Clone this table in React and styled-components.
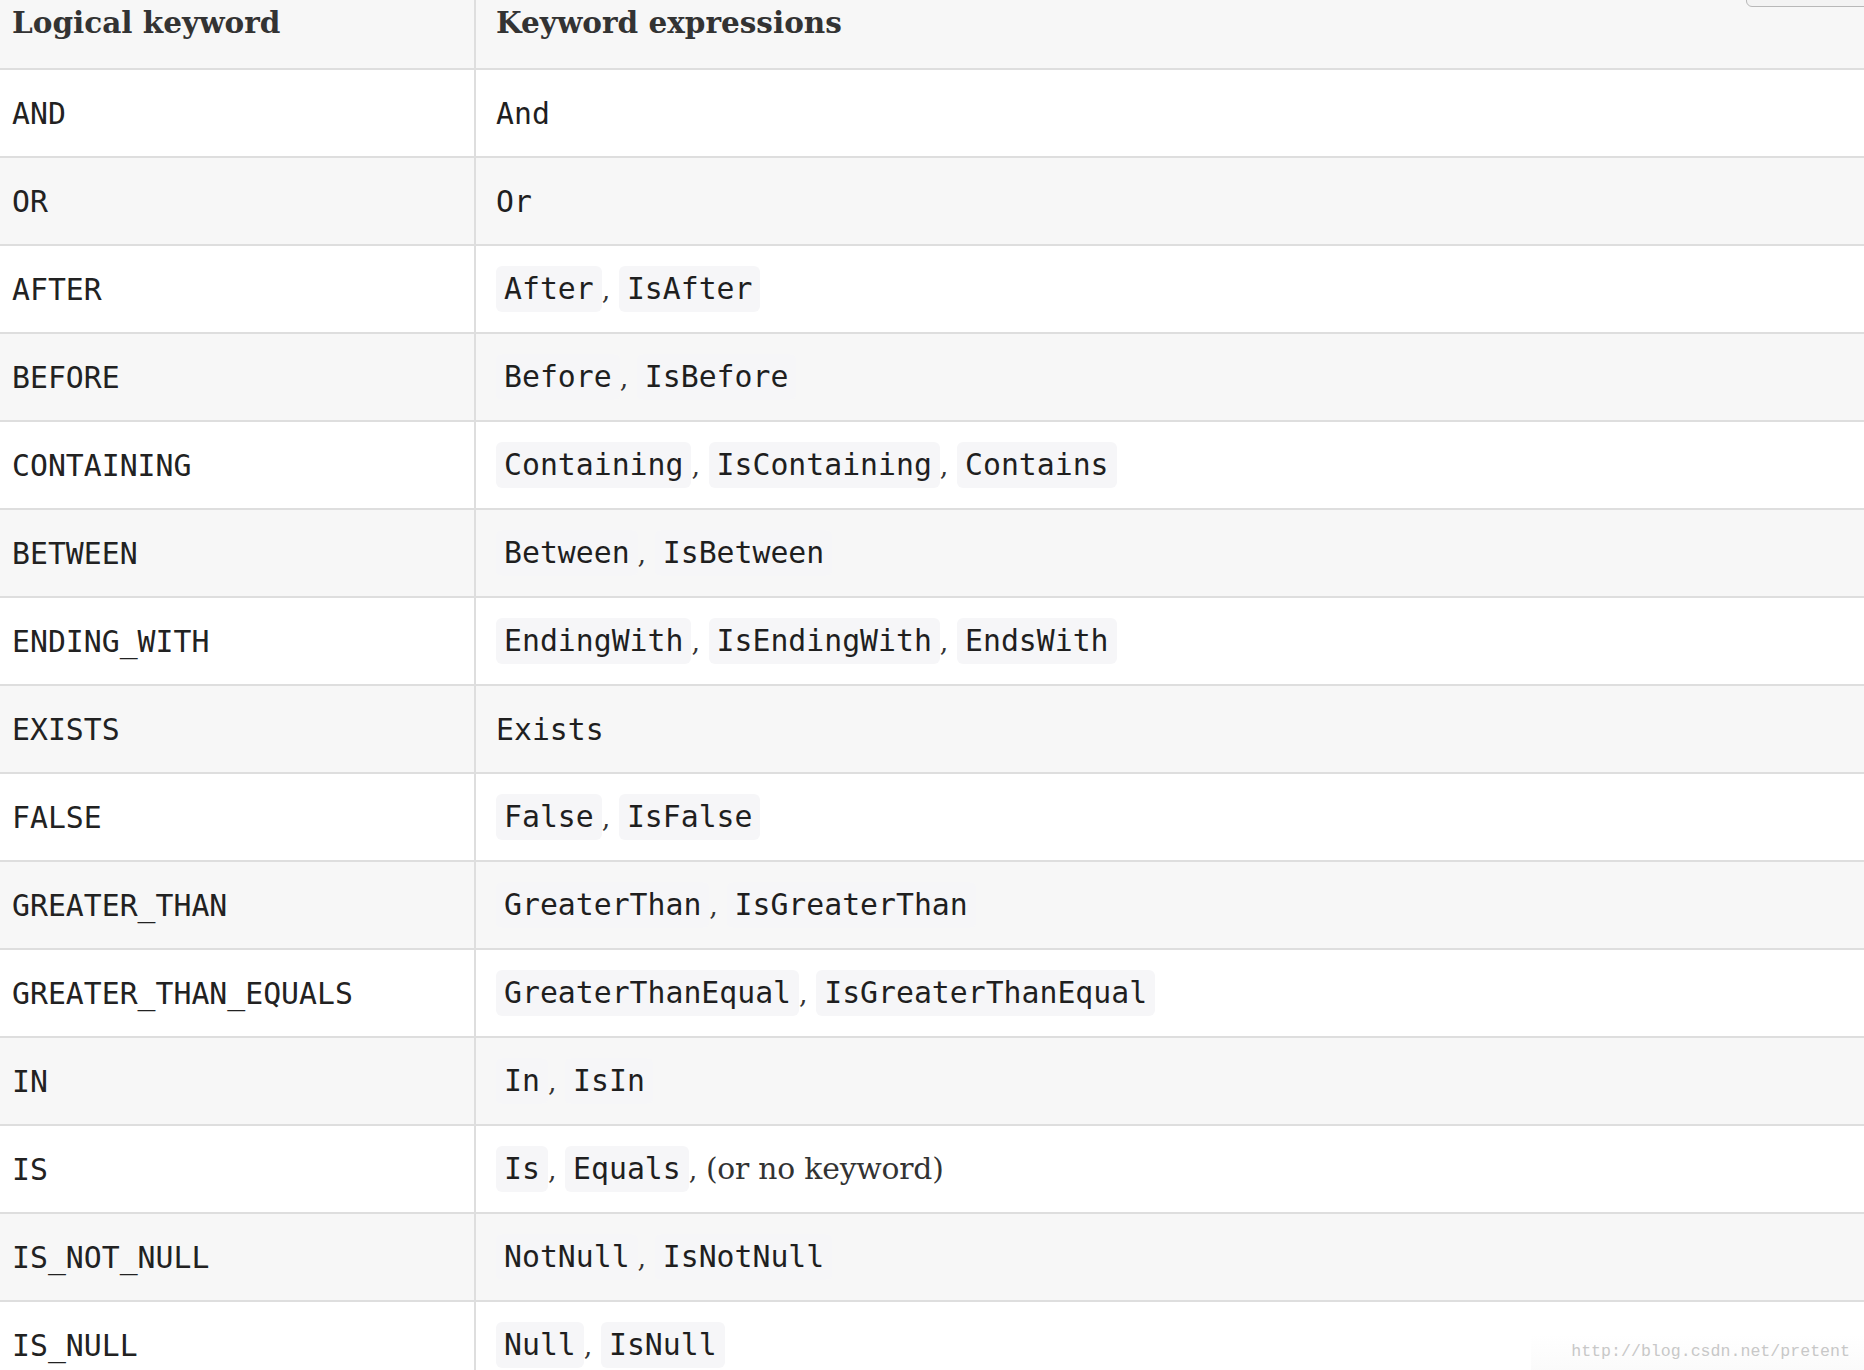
import React from 'react';
import styled, { createGlobalStyle } from 'styled-components';

const GlobalStyle = createGlobalStyle`
  html, body {
    margin: 0;
    padding: 0;
    background: #ffffff;
  }
  body {
    overflow: hidden;
    height: 1370px;
  }
`;

const Page = styled.div`
  position: relative;
  width: 1864px;
  height: 1370px;
  overflow: hidden;
`;

const Table = styled.div`
  margin-top: -18px;
  display: flex;
  flex-direction: column;
`;

const Row = styled.div`
  display: grid;
  grid-template-columns: 476px 1fr;
  height: 88px;
  box-sizing: border-box;
  border-bottom: 2px solid #dedede;
  background: ${p => (p.$shaded ? '#f7f7f7' : '#ffffff')};
`;

const Cell = styled.div`
  display: flex;
  align-items: center;
  box-sizing: border-box;
  padding-left: ${p => (p.$first ? '12px' : '20px')};
  border-right: ${p => (p.$first ? '2px solid #dedede' : 'none')};
  font-family: "DejaVu Sans Mono", "Liberation Mono", monospace;
  font-size: 29.8px;
  color: #222;
  white-space: pre;
`;

const HeadCell = styled(Cell)`
  padding-bottom: 5px;
  font-family: "DejaVu Serif", "Liberation Serif", serif;
  font-weight: bold;
  font-size: 29.5px;
  color: #333;
`;

const Exprs = styled.div`
  font-family: "DejaVu Serif", "Liberation Serif", serif;
  font-size: 27px;
  color: #333;
`;

const Note = styled.span`
  font-size: 29.8px;
  letter-spacing: -0.2px;
`;

const Code = styled.code`
  display: inline-block;
  font-family: "DejaVu Sans Mono", "Liberation Mono", monospace;
  font-size: 29.8px;
  line-height: 34px;
  padding: 6px 8px;
  border-radius: 6px;
  background: #f6f6f8;
  color: #1f1f1f;
`;

const Plain = styled.span`
  font-family: "DejaVu Sans Mono", "Liberation Mono", monospace;
  font-size: 29.8px;
  color: #1f1f1f;
`;

const CornerBox = styled.div`
  position: absolute;
  top: -30px;
  left: 1746px;
  width: 130px;
  height: 37px;
  box-sizing: border-box;
  border: 1px solid #b8b8b8;
  border-radius: 6px;
  background: #f3f3f3;
`;

const Watermark = styled.div`
  position: absolute;
  right: 0;
  bottom: 0;
  padding: 7px 14px 9px 40px;
  font-family: "Liberation Mono", "DejaVu Sans Mono", monospace;
  font-size: 16.6px;
  color: #c8c8c8;
  background: linear-gradient(to bottom, rgba(255,255,255,0), rgba(246,246,246,0.5));
`;

const rows = [
  ['AND', 'And'],
  ['OR', 'Or'],
  ['AFTER', ['After', 'IsAfter']],
  ['BEFORE', ['Before', 'IsBefore']],
  ['CONTAINING', ['Containing', 'IsContaining', 'Contains']],
  ['BETWEEN', ['Between', 'IsBetween']],
  ['ENDING_WITH', ['EndingWith', 'IsEndingWith', 'EndsWith']],
  ['EXISTS', 'Exists'],
  ['FALSE', ['False', 'IsFalse']],
  ['GREATER_THAN', ['GreaterThan', 'IsGreaterThan']],
  ['GREATER_THAN_EQUALS', ['GreaterThanEqual', 'IsGreaterThanEqual']],
  ['IN', ['In', 'IsIn']],
  ['IS', ['Is', 'Equals'], '(or no keyword)'],
  ['IS_NOT_NULL', ['NotNull', 'IsNotNull']],
  ['IS_NULL', ['Null', 'IsNull']],
];

const Expressions = ({ value, note }) => {
  if (typeof value === 'string') return <Plain>{value}</Plain>;
  return (
    <Exprs>
      {value.map((v, i) => (
        <React.Fragment key={v}>
          {i > 0 && ', '}
          <Code>{v}</Code>
        </React.Fragment>
      ))}
      {note && (
        <>
          {', '}
          <Note>{note}</Note>
        </>
      )}
    </Exprs>
  );
};

const App = () => {
  return (
    <Page>
      <GlobalStyle />
      <Table>
        <Row $shaded>
          <HeadCell $first>Logical keyword</HeadCell>
          <HeadCell>Keyword expressions</HeadCell>
        </Row>
        {rows.map(([kw, value, note], i) => (
          <Row key={kw} $shaded={i % 2 === 1}>
            <Cell $first>{kw}</Cell>
            <Cell>
              <Expressions value={value} note={note} />
            </Cell>
          </Row>
        ))}
      </Table>
      <CornerBox />
      <Watermark>http://blog.csdn.net/pretent</Watermark>
    </Page>
  );
};

export default App;
